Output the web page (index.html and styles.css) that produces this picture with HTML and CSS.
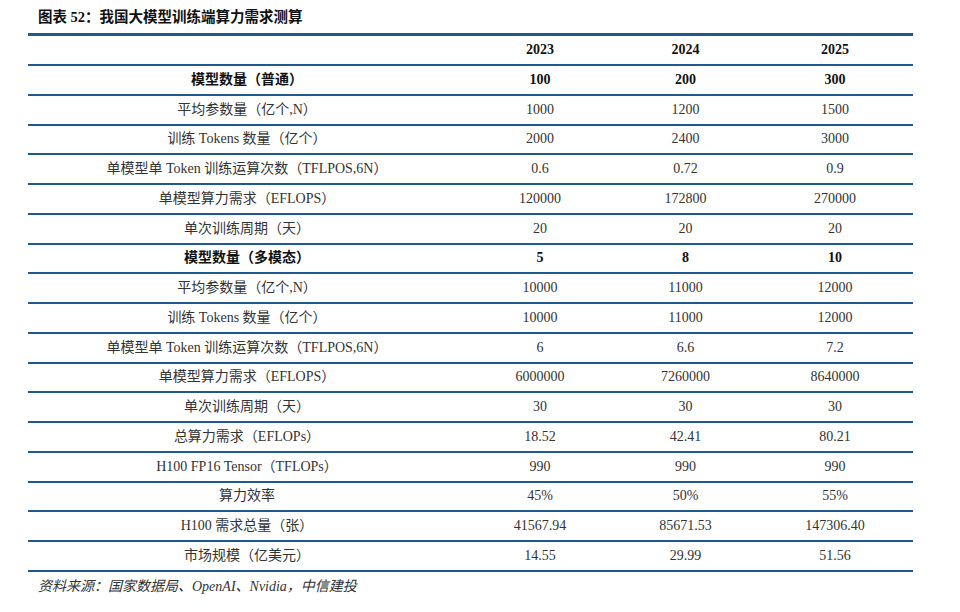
FILE: index.html
```html
<!DOCTYPE html>
<html lang="zh-CN">
<head>
<meta charset="utf-8">
<title>我国大模型训练端算力需求测算</title>
<link rel="stylesheet" href="styles.css">
</head>
<body>
<div class="page">
  <h1 class="title">图表 52：我国大模型训练端算力需求测算</h1>
  <div class="table">
    <div class="row head"><span></span><span>2023</span><span>2024</span><span>2025</span></div>
    <div class="row strong"><span>模型数量（普通）</span><span>100</span><span>200</span><span>300</span></div>
    <div class="row"><span>平均参数量（亿个,N）</span><span>1000</span><span>1200</span><span>1500</span></div>
    <div class="row"><span>训练 Tokens 数量（亿个）</span><span>2000</span><span>2400</span><span>3000</span></div>
    <div class="row"><span>单模型单 Token 训练运算次数（TFLPOS,6N）</span><span>0.6</span><span>0.72</span><span>0.9</span></div>
    <div class="row"><span>单模型算力需求（EFLOPS）</span><span>120000</span><span>172800</span><span>270000</span></div>
    <div class="row"><span>单次训练周期（天）</span><span>20</span><span>20</span><span>20</span></div>
    <div class="row strong"><span>模型数量（多模态）</span><span>5</span><span>8</span><span>10</span></div>
    <div class="row"><span>平均参数量（亿个,N）</span><span>10000</span><span>11000</span><span>12000</span></div>
    <div class="row"><span>训练 Tokens 数量（亿个）</span><span>10000</span><span>11000</span><span>12000</span></div>
    <div class="row"><span>单模型单 Token 训练运算次数（TFLPOS,6N）</span><span>6</span><span>6.6</span><span>7.2</span></div>
    <div class="row"><span>单模型算力需求（EFLOPS）</span><span>6000000</span><span>7260000</span><span>8640000</span></div>
    <div class="row"><span>单次训练周期（天）</span><span>30</span><span>30</span><span>30</span></div>
    <div class="row"><span>总算力需求（EFLOPs）</span><span>18.52</span><span>42.41</span><span>80.21</span></div>
    <div class="row"><span>H100 FP16 Tensor（TFLOPs）</span><span>990</span><span>990</span><span>990</span></div>
    <div class="row"><span>算力效率</span><span>45%</span><span>50%</span><span>55%</span></div>
    <div class="row"><span>H100 需求总量（张）</span><span>41567.94</span><span>85671.53</span><span>147306.40</span></div>
    <div class="row"><span>市场规模（亿美元）</span><span>14.55</span><span>29.99</span><span>51.56</span></div>
  </div>
  <p class="source">资料来源：国家数据局、OpenAI、Nvidia，中信建投</p>
</div>
</body>
</html>
```

FILE: styles.css
```css
html, body {
  margin: 0;
  padding: 0;
  background: #ffffff;
}

.page {
  width: 960px;
  height: 612px;
  padding-left: 28px;
  box-sizing: border-box;
  font-family: "Liberation Serif", "Noto Sans CJK SC", serif;
  color: #333333;
}

.title {
  margin: 0;
  padding: 7px 0 0 10px;
  height: 33px;
  box-sizing: border-box;
  font-size: 14.5px;
  line-height: 20px;
  font-weight: bold;
  color: #111111;
}

.table {
  width: 885px;
  border-top: 3px solid #1f5a8c;
}

.row {
  display: grid;
  grid-template-columns: 438px 148px 143px 156px;
  align-items: center;
  height: 29.75px;
  box-sizing: border-box;
  border-bottom: 2px solid #1f5a8c;
  font-size: 14px;
  line-height: 18px;
}

.row span {
  text-align: center;
  white-space: nowrap;
}

.row.head {
  height: 30px;
  font-weight: bold;
  color: #111111;
}

.row.strong {
  font-weight: bold;
  color: #111111;
}

.source {
  margin: 5px 0 0 10px;
  font-size: 14px;
  line-height: 20px;
  font-style: italic;
  color: #333333;
}
```
